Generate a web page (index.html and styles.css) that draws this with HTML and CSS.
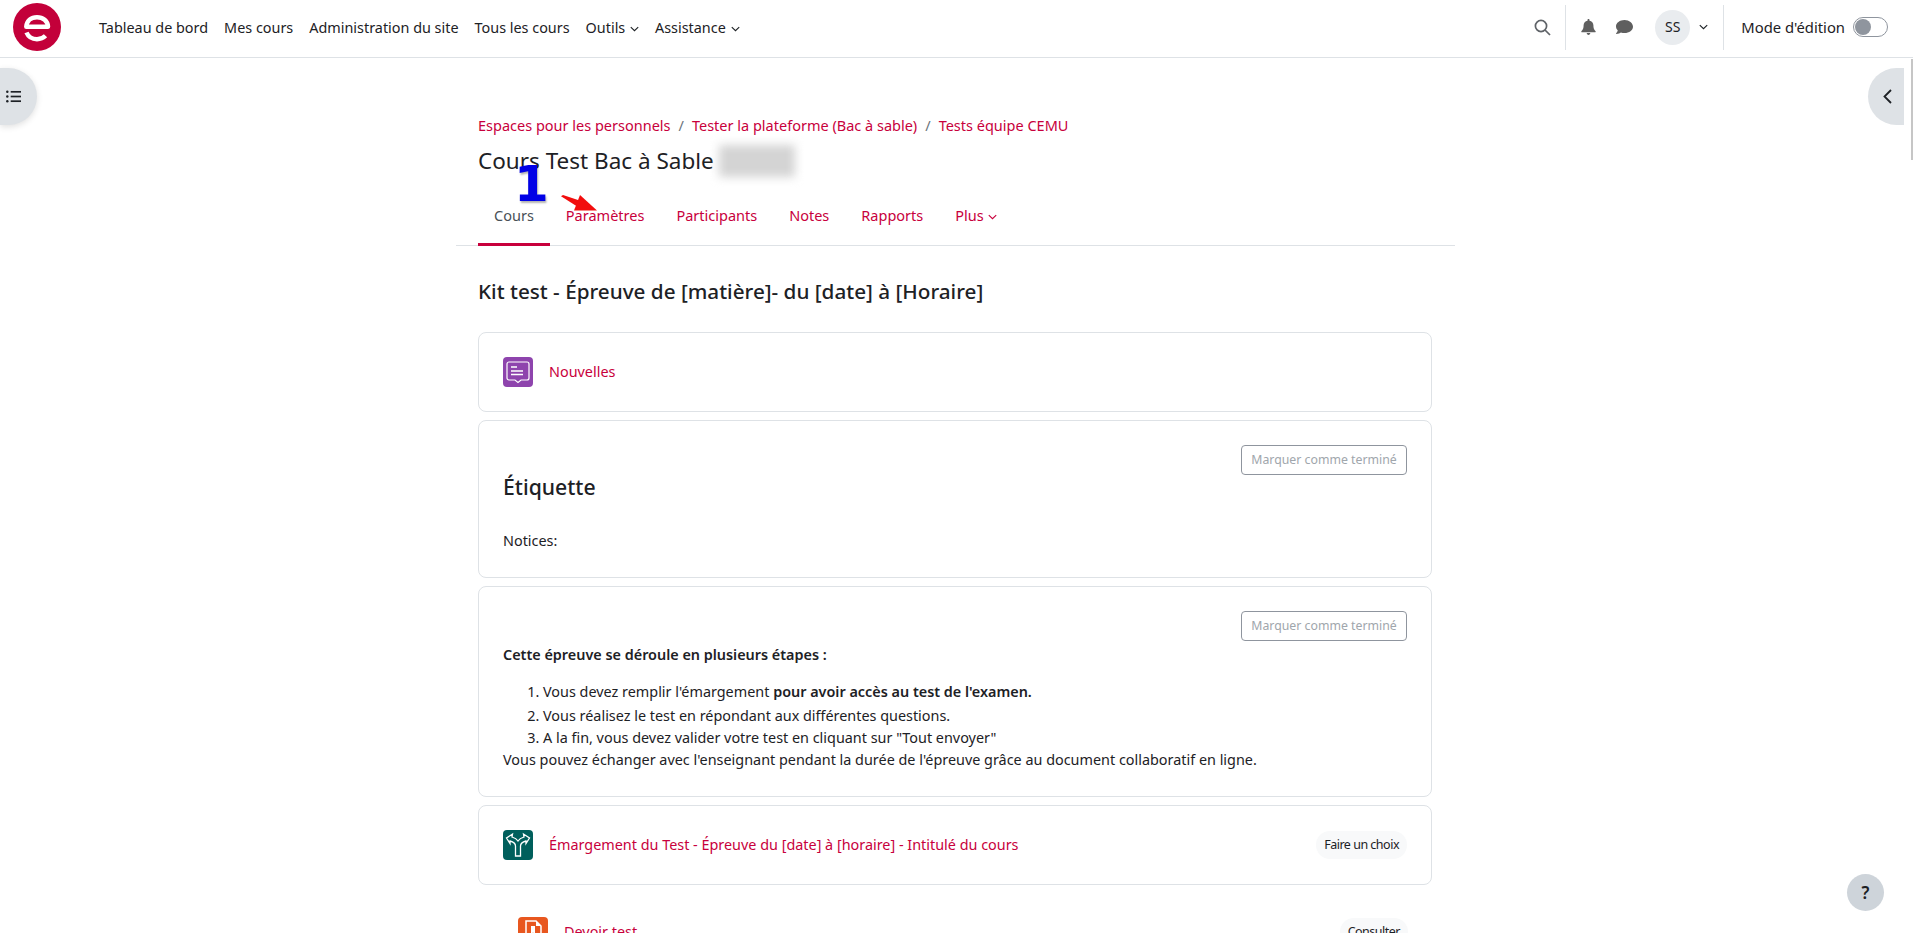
FILE: index.html
```html
<!DOCTYPE html>
<html lang="fr">
<head>
<meta charset="utf-8">
<title>Cours Test Bac à Sable</title>
<link rel="stylesheet" href="styles.css">
</head>
<body>
<header class="topbar">
  <a class="logo" href="#" aria-label="Accueil">
    <svg viewBox="0 0 48 48" width="48" height="48"><circle cx="24" cy="24" r="24" fill="#c3003a"/><g fill="none" stroke="#fff" stroke-width="4.500"><path d="M13.300 23.700C13.800 17.800 18 14.200 24 14.200S34.700 17.800 35 23.700Z" stroke-linejoin="round"/><path d="M13.500 29.500C15.300 33.800 19.300 36.200 24 36.200 27.500 36.200 30.300 35.100 32.500 32.800"/></g></svg>
  </a>
  <nav class="mainnav">
    <a href="#">Tableau de bord</a>
    <a href="#">Mes cours</a>
    <a href="#">Administration du site</a>
    <a href="#">Tous les cours</a>
    <a href="#">Outils <svg class="chev" viewBox="0 0 8 5"><path d="M.7.8 4 4l3.300-3.200"/></svg></a>
    <a href="#">Assistance <svg class="chev" viewBox="0 0 8 5"><path d="M.7.8 4 4l3.300-3.200"/></svg></a>
  </nav>
  <div class="tools">
    <svg class="search" viewBox="0 0 17 17"><circle cx="7" cy="7" r="5.600"/><path d="m11 11 5 5"/></svg>
    <span class="vline"></span>
    <svg class="bell" viewBox="0 0 15 16"><path d="M7.500 0c-.6 0-1 .4-1 1v.7C4.200 2.100 2.600 4 2.600 6.300c0 3.700-1.100 4.500-2.200 5.900-.3.400 0 1 .5 1h13.200c.5 0 .8-.6.500-1-1.100-1.400-2.200-2.200-2.200-5.900 0-2.300-1.600-4.200-3.900-4.600V1c0-.6-.4-1-1-1zM5.700 14.100c0 1 .8 1.900 1.800 1.900s1.800-.9 1.800-1.900z"/></svg>
    <svg class="chat" viewBox="0 0 17 14"><path d="M8.500 0C3.800 0 0 2.900 0 6.400c0 1.500.7 2.900 1.800 4-.4 1.500-1.700 2.800-1.700 2.900-.1.200 0 .7.300.7 2 0 3.600-.9 4.500-1.500 1.100.4 2.300.6 3.600.6 4.700 0 8.500-2.800 8.500-6.300S13.200 0 8.500 0z"/></svg>
    <span class="avatar">SS</span>
    <svg class="chev usermenu" viewBox="0 0 8 5"><path d="M.7.8 4 4l3.300-3.200"/></svg>
    <span class="vline"></span>
    <span class="editlabel">Mode d'édition</span>
    <span class="toggle"><i></i></span>
  </div>
</header>

<button class="drawer left" aria-label="Index"><svg viewBox="0 0 16 13"><g fill="#1d2125"><circle cx="1.400" cy="1.500" r="1.300"/><circle cx="1.400" cy="6.500" r="1.300"/><circle cx="1.400" cy="11.500" r="1.300"/><rect x="5" y=".6" width="11" height="1.800"/><rect x="5" y="5.600" width="11" height="1.800"/><rect x="5" y="10.600" width="11" height="1.800"/></g></svg></button>
<button class="drawer right" aria-label="Blocs"><svg viewBox="0 0 9 15"><path d="M8 1 1.500 7.500 8 14" fill="none" stroke="#1d2125" stroke-width="1.800"/></svg></button>
<span class="scrollthumb"></span>

<main class="page">
  <div class="pagehead">
    <ol class="crumbs">
      <li><a href="#">Espaces pour les personnels</a></li>
      <li><a href="#">Tester la plateforme (Bac à sable)</a></li>
      <li><a href="#">Tests équipe CEMU</a></li>
    </ol>
    <h1>Cours Test Bac à Sable <span class="blur"></span></h1>
  </div>
  <nav class="tabs">
    <a class="active" href="#">Cours</a>
    <a href="#">Paramètres</a>
    <a href="#">Participants</a>
    <a href="#">Notes</a>
    <a href="#">Rapports</a>
    <a href="#">Plus <svg class="chev" viewBox="0 0 8 5"><path d="M.7.8 4 4l3.300-3.200"/></svg></a>
  </nav>
  <span class="mark-num">1</span>
  <svg class="mark-arrow" viewBox="0 0 37 17"><path d="M0 1.200 2 0 20 6 17 12z" fill="#f20d0d"/><path d="M19 0 36 15.500H13z" fill="#f20d0d"/></svg>

  <section class="content">
    <h2>Kit test - Épreuve de [matière]- du [date] à [Horaire]</h2>

    <article class="card activity news">
      <span class="icon purple"><svg viewBox="0 0 30 30" fill="none" stroke="#fff"><path d="M6 5h18a2 2 0 0 1 2 2v14a2 2 0 0 1-2 2h-6l-3 2.500-3-2.500H6a2 2 0 0 1-2-2V7a2 2 0 0 1 2-2z" stroke-width="1.200"/><path d="M8 10h6M8 14h12M8 17.500h12" stroke-width="1.500"/></svg></span>
      <a href="#">Nouvelles</a>
    </article>

    <article class="card label">
      <button class="done">Marquer comme terminé</button>
      <h3>Étiquette</h3>
      <p class="notices">Notices:</p>
    </article>

    <article class="card steps">
      <button class="done">Marquer comme terminé</button>
      <p class="lead"><strong>Cette épreuve se déroule en plusieurs étapes :</strong></p>
      <ol>
        <li class="first">Vous devez remplir l'émargement <strong>pour avoir accès au test de l'examen.</strong></li>
        <li>Vous réalisez le test en répondant aux différentes questions.</li>
        <li>A la fin, vous devez valider votre test en cliquant sur "Tout envoyer"</li>
      </ol>
      <p>Vous pouvez échanger avec l'enseignant pendant la durée de l'épreuve grâce au document collaboratif en ligne.</p>
    </article>

    <article class="card activity choice">
      <span class="icon green"><svg viewBox="0 0 30 30" fill="none" stroke="#fff" stroke-width="1.300"><path d="M12.500 26V16C12.500 13 9 11.500 7 11L7 13.500 3.500 8 9.500 4 9 7C12 8 14 9.500 15 11 16 9.500 18 8 21 7L20.500 4 26.500 8 23 13.500 23 11C21 11.500 17.500 13 17.500 16V26Z"/></svg></span>
      <a href="#">Émargement du Test - Épreuve du [date] à [horaire] - Intitulé du cours</a>
      <span class="pill">Faire un choix</span>
    </article>

    <article class="activity assign">
      <span class="icon orange"><svg viewBox="0 0 30 30"><path d="M8 4h10l5 5v16H8z" fill="none" stroke="#fff" stroke-width="1.500"/><path d="M13 9h4v8l-2-1.500-2 1.500z" fill="#fff"/><path d="M18 4v5h5z" fill="#fff"/></svg></span>
      <a href="#">Devoir test</a>
      <span class="pill">Consulter</span>
    </article>
  </section>
</main>

<button class="help" aria-label="Aide">?</button>
</body>
</html>
```

FILE: styles.css
```css
* { box-sizing: border-box; }
html, body { height: 100%; }
body {
  margin: 0;
  height: 933px;
  overflow: hidden;
  position: relative;
  background: #fff;
  color: #1d2125;
  font: 14.400px/22px "Noto Sans", sans-serif;
}
a { color: #c8003c; text-decoration: none; }
p, h1, h2, h3, ol { margin: 0; }
button { font: inherit; }
.chev { width: 9px; height: 6px; fill: none; stroke: currentColor; stroke-width: 1; vertical-align: 1px; margin-left: 1px; }

.topbar {
  height: 58px;
  display: flex;
  align-items: center;
  border-bottom: 1px solid #dee2e6;
  padding: 0 0 3px 13px;
  position: relative;
}
.logo { display: flex; width: 48px; height: 48px; margin-right: 38px; }
.mainnav { display: flex; gap: 16px; font-size: 14.400px; margin-top: 1px; }
.mainnav a { color: #1d2125; white-space: nowrap; }
.tools { margin-left: auto; display: flex; align-items: center; height: 100%; padding-right: 25px; }
.search { width: 17px; height: 17px; fill: none; stroke: #5f6368; stroke-width: 1.700; margin-right: 14px; }
.vline { width: 1px; height: 45px; background: #dee2e6; }
.bell { width: 15px; height: 16px; fill: #5f5f5f; margin: 0 20px 0 15px; }
.chat { width: 17px; height: 14px; fill: #5f5f5f; margin-right: 22px; }
.avatar { width: 35px; height: 35px; border-radius: 50%; background: #e9ecef; display: flex; align-items: center; justify-content: center; font-size: 14px; }
.usermenu { margin: 0 15px 0 9px; }
.editlabel { margin: 0 8px 0 17px; font-size: 14.800px; white-space: nowrap; }
.toggle { width: 35px; height: 20px; border: 1px solid #8f959e; border-radius: 10px; display: flex; align-items: center; padding-left: 1px; }
.toggle i { width: 16px; height: 16px; border-radius: 50%; background: #8f959e; }

.drawer { position: absolute; top: 68px; height: 57px; width: 37px; border: 0; background: #dee2e6; padding: 0; display: flex; align-items: center; }
.drawer.left { left: 0; border-radius: 0 28.500px 28.500px 0; padding-left: 6px; box-shadow: 0 2px 6px rgba(0,0,0,.12); }
.drawer.left svg { width: 15px; height: 13px; }
.drawer.right { left: 1868px; width: 36px; border-radius: 28.500px 0 0 28.500px; padding-left: 15px; }
.drawer.right svg { width: 9px; height: 15px; }
.scrollthumb { position: absolute; left: 1911px; top: 59px; width: 2px; height: 101px; background: #c6c6c6; }

.page { width: 999px; margin-left: 456px; position: relative; }
.pagehead { padding: 55px 22px 0; }
.crumbs { list-style: none; padding: 0; display: flex; font-size: 14.500px; line-height: 24px; }
.crumbs li + li::before { content: "/"; color: #6a737b; padding: 0 8px; }
h1 { font-weight: 400; font-size: 22.500px; line-height: 32px; margin-top: 8px; display: flex; gap: 5px; }
.blur { display: block; width: 76px; height: 32px; background: #d4d4d4; filter: blur(5px); }
.tabs { display: flex; height: 59px; margin-top: 10px; padding-left: 22px; border-bottom: 1px solid #dee2e6; font-size: 14.500px; }
.tabs a { padding: 16px 16px 0; height: 59px; white-space: nowrap; line-height: 24px; }
.tabs a.active { color: #495057; border-bottom: 3px solid #c8003c; }
.mark-num { position: absolute; left: 58px; top: 98px; color: #0000e6; font: 700 50px/56px "DejaVu Sans", sans-serif; text-shadow: 1px 2px 2px rgba(0,0,0,.3); }
.mark-arrow { position: absolute; left: 105px; top: 137px; width: 37px; height: 17px; }

.content { padding: 0 23px 0 22px; }
h2 { font-weight: 500; font-size: 20.700px; line-height: 28px; margin: 31px 0 27px; }
.card { border: 1px solid #dee2e6; border-radius: 8px; margin-bottom: 8px; position: relative; }
.activity { display: flex; align-items: center; }
.icon { width: 30px; height: 30px; border-radius: 4px; flex: none; margin-right: 16px; display: flex; }
.icon svg { width: 30px; height: 30px; }
.purple { background: #8e44ad; }
.green { background: #005f5c; }
.orange { background: #e8571f; }
.news { height: 80px; padding: 0 24px; }
.done { position: absolute; right: 24px; top: 24px; width: 166px; height: 30px; padding: 0; background: #fff; border: 1px solid #8f959e; border-radius: 4px; color: #a0a6ac; font-size: 12.300px; white-space: nowrap; }
.label { height: 158px; padding: 0 24px; }
h3 { font-weight: 500; font-size: 21.200px; line-height: 30px; padding-top: 51px; }
.notices { margin-top: 28px; }
.steps { height: 211px; padding: 57px 24px 0; }
.steps ol { padding-left: 40px; margin-top: 15px; }
.steps .first { margin-bottom: 2px; }
.steps strong { font-weight: 600; }
.choice { height: 80px; padding: 0 24px; }
.pill { margin-left: auto; background: #f8f9fa; border-radius: 14px; height: 28px; line-height: 28px; padding: 0 8px; font-size: 12.500px; letter-spacing: -.5px; white-space: nowrap; }
.assign { padding: 24px 24px 0 40px; height: 54px; margin-top: 8px; }

.help { position: absolute; left: 1847px; top: 874px; width: 37px; height: 37px; border: 0; border-radius: 50%; background: #ced4da; color: #1d2125; font-size: 17px; font-weight: 600; padding: 0; }
```
